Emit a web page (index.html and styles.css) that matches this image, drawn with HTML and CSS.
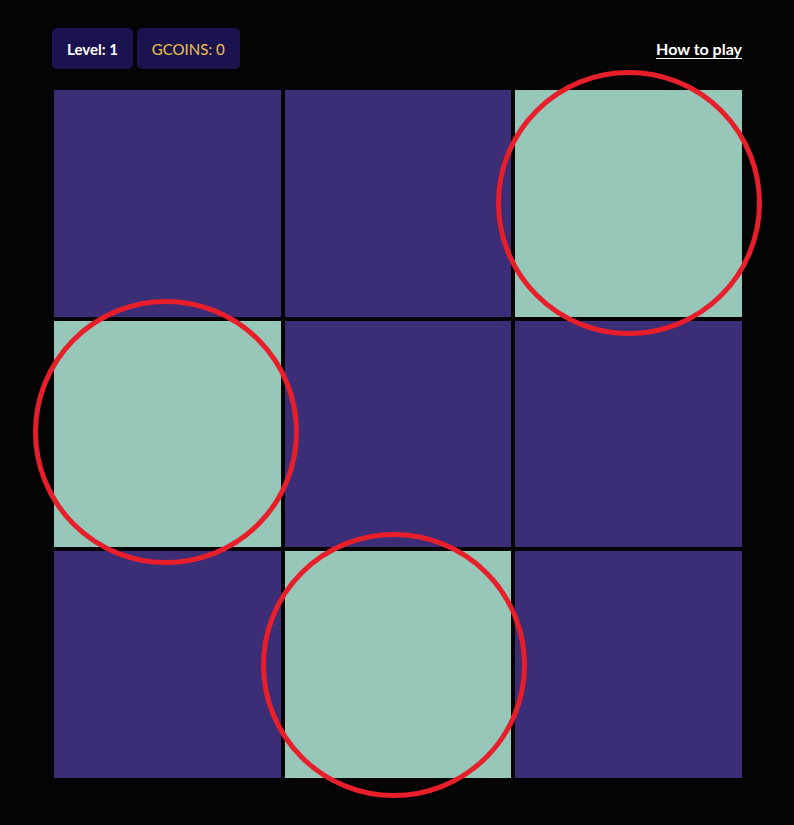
FILE: index.html
```html
<!DOCTYPE html>
<html lang="en">
<head>
<meta charset="utf-8">
<title>Game</title>
<link rel="stylesheet" href="styles.css">
</head>
<body>
<main class="game">
  <header class="top">
    <div class="stats">
      <div class="badge level">Level: 1</div>
      <div class="badge coins">GCOINS: 0</div>
    </div>
    <a class="help" href="#">How to play</a>
  </header>
  <section class="board">
    <div class="cell"></div>
    <div class="cell"></div>
    <div class="cell lit mark"></div>
    <div class="cell lit mark mark-l"></div>
    <div class="cell"></div>
    <div class="cell"></div>
    <div class="cell"></div>
    <div class="cell lit mark mark-b"></div>
    <div class="cell"></div>
  </section>
</main>
</body>
</html>
```
FILE: styles.css
```css
html, body {
  margin: 0;
  padding: 0;
  background: #040405;
}
body {
  font-family: Lato, "Liberation Sans", sans-serif;
}
.game {
  width: 692px;
  margin-left: 52px;
  padding-top: 28px;
  padding-bottom: 44px;
}
.top {
  display: flex;
  justify-content: space-between;
  align-items: center;
  padding-right: 2px;
  height: 41px;
  margin-bottom: 19px;
}
.stats {
  display: flex;
  gap: 4px;
}
.badge {
  height: 41px;
  box-sizing: border-box;
  padding: 0 15px;
  display: flex;
  align-items: center;
  background: #1b1250;
  border-radius: 5px;
  font-size: 15px;
}
.level {
  color: #ffffff;
  font-weight: 700;
}
.coins {
  color: #f0c24a;
  font-weight: 400;
}
.help {
  color: #ffffff;
  font-weight: 700;
  font-size: 16px;
  text-decoration: underline;
  text-underline-offset: 3px;
}
.board {
  display: grid;
  grid-template-columns: repeat(3, 1fr);
  width: 692px;
  height: 692px;
}
.cell {
  position: relative;
  background: #3b2d76;
  border: 2px solid #040405;
}
.lit {
  background: #96c7b8;
}
.mark::after {
  content: "";
  position: absolute;
  left: 50%;
  top: 50%;
  width: 256px;
  height: 256px;
  margin: -133px 0 0 -133px;
  border: 5px solid #e81f2a;
  border-radius: 50%;
  z-index: 2;
}
.mark-l::after {
  margin-left: -134px;
  margin-top: -135px;
}
.mark-b::after {
  margin-left: -137px;
}
```
